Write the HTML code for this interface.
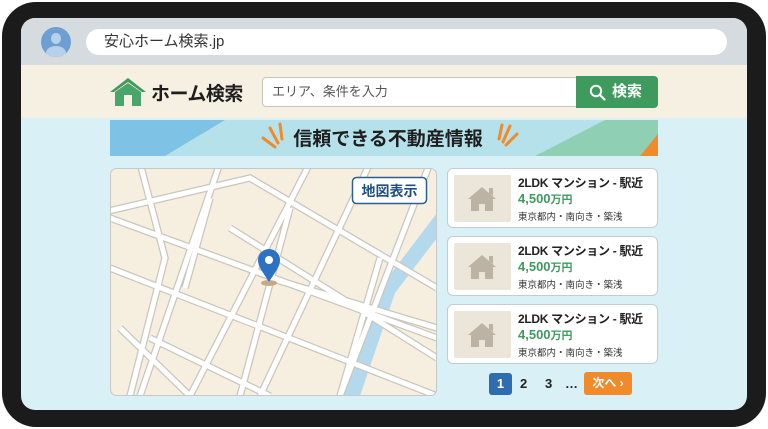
<!DOCTYPE html>
<html><head><meta charset="utf-8"><style>
*{margin:0;padding:0;box-sizing:border-box}
body{width:768px;height:429px;background:#fff;position:relative;overflow:hidden;font-family:"Liberation Sans","Noto Sans CJK JP",sans-serif}
.frame{position:absolute;left:2px;top:2px;width:764px;height:425px;background:#1b1b1b;border-radius:34px}
.screen{position:absolute;left:21px;top:18px;width:726px;height:392px;border-radius:14px;overflow:hidden;background:#d9f0f6}
.bar{position:absolute;left:0;top:0;width:726px;height:47px;background:#d6dbdf}
.url{position:absolute;left:65px;top:11px;width:641px;height:26px;background:#fff;border-radius:13px;font-size:15px;line-height:26px;padding-left:18px;color:#333}
.av{position:absolute;left:20px;top:9px;width:30px;height:30px;border-radius:50%;background:#6d9fd3;overflow:hidden}
.hdr{position:absolute;left:0;top:47px;width:726px;height:53px;background:#f6f0e3}
.abs{position:absolute}
.card{position:absolute;left:426px;width:211px;height:60px;background:#fff;border:1px solid #c4ccd2;border-radius:6px}
.card .th{position:absolute;left:6px;top:6px;width:57px;height:47px;background:#ebe5da;border-radius:2px}
.card .t{position:absolute;left:70px;top:5px;font-size:12px;font-weight:bold;color:#222;white-space:nowrap;letter-spacing:-0.3px}
.card .p{position:absolute;left:70px;top:22px;font-size:13px;font-weight:bold;color:#3f9a5e}
.card .p small{font-size:11px}
.card .s{position:absolute;left:70px;top:40px;font-size:9.5px;color:#333;white-space:nowrap}
</style></head><body>
<div class="frame"></div>
<div class="screen">
 <div class="bar">
  <div class="av"><div class="abs" style="left:10px;top:6px;width:10px;height:11px;border-radius:50%;background:#b8d0ea"></div><div class="abs" style="left:5px;top:19px;width:20px;height:14px;border-radius:50%;background:#b8d0ea"></div></div>
  <div class="url">安心ホーム検索.jp</div>
 </div>
 <div class="hdr">
  <svg class="abs" style="left:88px;top:12px" width="38" height="30" viewBox="0 0 38 30"><path d="M1 15 L19 1 L37 15 L33 15 L19 5 L5 15Z" fill="#3f9a5e"/><path d="M6 15 L19 6 L32 15 L32 29 L6 29Z" fill="#4aa56a"/><rect x="15" y="18" width="8" height="11" fill="#f6f0e3"/></svg>
  <div class="abs" style="left:130px;top:14px;font-size:19px;font-weight:bold;color:#1e1e1e;letter-spacing:-0.5px">ホーム検索</div>
  <div class="abs" style="left:241px;top:12px;width:315px;height:30px;background:#fff;border:1.5px solid #c9c2b6;border-radius:4px 0 0 4px;font-size:13px;line-height:27px;padding-left:9px;color:#555">エリア、条件を入力</div>
  <div class="abs" style="left:555px;top:11px;width:82px;height:32px;background:#3f9a5e;border-radius:0 4px 4px 0;color:#fff;font-size:15px;font-weight:bold;line-height:32px;padding-left:36px">検索
   <svg class="abs" style="left:13px;top:8px" width="17" height="17" viewBox="0 0 17 17"><circle cx="7" cy="7" r="5.2" fill="none" stroke="#fff" stroke-width="2"/><path d="M11 11L15.5 15.5" stroke="#fff" stroke-width="2.2" stroke-linecap="round"/></svg></div>
 </div>
 <svg class="abs" style="left:89px;top:102px" width="548" height="36" viewBox="0 0 548 36">
  <rect width="548" height="36" fill="#b5e2ea"/>
  <path d="M0 0H115L55 36H0Z" fill="#7ec3e6"/>
  <path d="M495 0H548V36H425Z" fill="#8fd0b4"/>
  <path d="M548 14V36H530Z" fill="#f08a2a"/>
  <path d="M160 8l8 15M153 18l12 9M170 4l2 15" stroke="#f08a2a" stroke-width="3" stroke-linecap="round"/>
  <path d="M400 6l-7 16M407 14l-11 11M392 5l-3 14" stroke="#f08a2a" stroke-width="3" stroke-linecap="round"/>
  <text x="278" y="25" text-anchor="middle" font-size="19" font-weight="bold" fill="#1e1e1e" font-family="Liberation Sans,Noto Sans CJK JP,sans-serif">信頼できる不動産情報</text>
 </svg>
 <svg class="abs" style="left:89px;top:150px" width="327" height="228" viewBox="0 0 327 228">
  <defs><clipPath id="c"><rect x="0.5" y="0.5" width="326" height="227" rx="6"/></clipPath></defs>
  <g clip-path="url(#c)">
  <rect width="327" height="228" fill="#f6efe0"/>
  <path d="M232 228 L270 120 L327 45 L327 70 L285 125 L250 228Z" fill="#b4d9ec"/>
  <g stroke="#c9c6bd" stroke-width="7.5" fill="none">
   <path d="M0 100L327 228M-10 45L140 10L327 120M0 50L327 170M30 -5L55 90L20 228M110 -5L30 228M200 -5L80 228M260 -5L150 228M320 -5L230 228M270 90L230 228M180 40L130 228M120 60L327 190M10 160L80 228M40 170L160 228M160 110L327 160M100 30L75 120"/>
  </g>
  <g stroke="#fff" stroke-width="5" fill="none">
   <path d="M0 100L327 228M-10 45L140 10L327 120M0 50L327 170M30 -5L55 90L20 228M110 -5L30 228M200 -5L80 228M260 -5L150 228M320 -5L230 228M270 90L230 228M180 40L130 228M120 60L327 190M10 160L80 228M40 170L160 228M160 110L327 160M100 30L75 120"/>
  </g>
  <ellipse cx="159" cy="115" rx="8" ry="3" fill="#c9a985"/>
  <path d="M159 114C153 104 148 99 148 92A11 11 0 0 1 170 92C170 99 165 104 159 114Z" fill="#2d72c2"/>
  <circle cx="159" cy="92" r="4" fill="#fff"/>
  <rect x="242.5" y="9.5" width="74" height="26" rx="4" fill="#fff" stroke="#2d5f93" stroke-width="1.5"/>
  <text x="279.5" y="28" text-anchor="middle" font-size="14" font-weight="bold" fill="#1f4f82" font-family="Liberation Sans,Noto Sans CJK JP,sans-serif">地図表示</text>
  </g>
  <rect x="0.5" y="0.5" width="326" height="227" rx="6" fill="none" stroke="#c4c8c6"/>
 </svg>
 <div class="card" style="top:150px"><div class="th"><svg width="57" height="47"><path d="M14 24L28 12L42 24H39V36H31V29H25V36H17V24Z M35 13h4v8l-4-3z" fill="#bdb3a4"/></svg></div><div class="t">2LDK マンション - 駅近</div><div class="p">4,500<small>万円</small></div><div class="s">東京都内・南向き・築浅</div></div>
 <div class="card" style="top:218px"><div class="th"><svg width="57" height="47"><path d="M14 24L28 12L42 24H39V36H31V29H25V36H17V24Z M35 13h4v8l-4-3z" fill="#bdb3a4"/></svg></div><div class="t">2LDK マンション - 駅近</div><div class="p">4,500<small>万円</small></div><div class="s">東京都内・南向き・築浅</div></div>
 <div class="card" style="top:286px"><div class="th"><svg width="57" height="47"><path d="M14 24L28 12L42 24H39V36H31V29H25V36H17V24Z M35 13h4v8l-4-3z" fill="#bdb3a4"/></svg></div><div class="t">2LDK マンション - 駅近</div><div class="p">4,500<small>万円</small></div><div class="s">東京都内・南向き・築浅</div></div>
 <div class="abs" style="left:468px;top:355px;width:23px;height:22px;background:#2f6db0;border-radius:3px;color:#fff;font-size:13px;font-weight:bold;text-align:center;line-height:22px">1</div>
 <div class="abs" style="left:499px;top:355px;font-size:13px;font-weight:bold;line-height:22px;color:#222">2</div>
 <div class="abs" style="left:524px;top:355px;font-size:13px;font-weight:bold;line-height:22px;color:#222">3</div>
 <div class="abs" style="left:544px;top:355px;font-size:13px;font-weight:bold;line-height:22px;color:#222">…</div>
 <div class="abs" style="left:563px;top:354px;width:48px;height:23px;background:#f08a2a;border-radius:3px;color:#fff;font-size:12px;font-weight:bold;text-align:center;line-height:23px">次へ ›</div>
</div>
</body></html>
